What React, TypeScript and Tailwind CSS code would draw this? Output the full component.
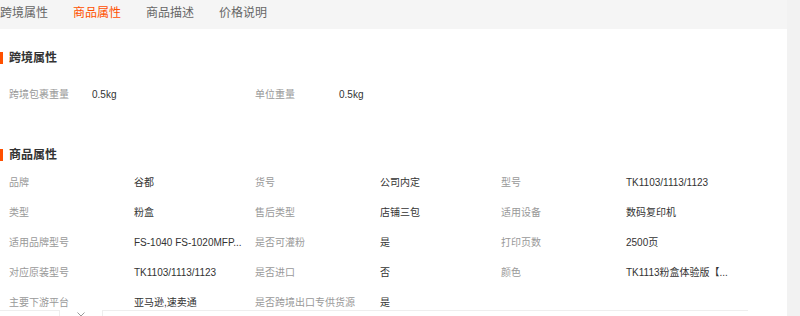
import React from "react";

const font = { fontFamily: '"Liberation Sans", "Noto Sans CJK SC", sans-serif' };

function Heading({ title }: { title: string }) {
  return (
    <div className="flex items-center h-[16px]">
      <div className="w-[3px] h-[12px] bg-[#ff5000]" />
      <div className="ml-[6px] text-[12px] font-bold text-[#333] leading-[16px]">{title}</div>
    </div>
  );
}

type Cell = [string, string];

function Row({ cells, labelW }: { cells: Cell[]; labelW: number }) {
  return (
    <div className="flex h-[30px] items-center pl-[9px] text-[10px]">
      {cells.map(([l, v], i) => (
        <div key={i} className="flex w-[246px] shrink-0">
          <div
            className="text-[#999] whitespace-nowrap shrink-0"
            style={{ width: labelW }}
          >
            {l}
          </div>
          <div className="text-[#333] whitespace-nowrap">{v}</div>
        </div>
      ))}
    </div>
  );
}

export default function App() {
  const rows: Cell[][] = [
    [["品牌", "谷都"], ["货号", "公司内定"], ["型号", "TK1103/1113/1123"]],
    [["类型", "粉盒"], ["售后类型", "店铺三包"], ["适用设备", "数码复印机"]],
    [["适用品牌型号", "FS-1040 FS-1020MFP..."], ["是否可灌粉", "是"], ["打印页数", "2500页"]],
    [["对应原装型号", "TK1103/1113/1123"], ["是否进口", "否"], ["颜色", "TK1113粉盒体验版【..."]],
    [["主要下游平台", "亚马逊,速卖通"], ["是否跨境出口专供货源", "是"]],
  ];
  return (
    <div className="relative flex items-start w-[800px] h-[316px] overflow-hidden bg-[#f2f2f2]" style={font}>
      <div className="w-[787px] h-[316px] shrink-0 bg-white">
        <div className="h-[29px] bg-[#f5f5f5] flex items-center gap-[25px] text-[12px] text-[#666] pb-[4px]">
          <span>跨境属性</span>
          <span className="text-[#ff5000]">商品属性</span>
          <span>商品描述</span>
          <span>价格说明</span>
        </div>
        <div className="pt-[21px]">
          <Heading title="跨境属性" />
          <div className="mt-[13px]">
            <div className="flex h-[30px] items-center pl-[9px] text-[10px]">
              <div className="flex w-[246px] shrink-0">
                <div className="w-[83px] text-[#999]">跨境包裹重量</div>
                <div className="text-[#333]">0.5kg</div>
              </div>
              <div className="flex w-[246px] shrink-0">
                <div className="w-[84px] text-[#999]">单位重量</div>
                <div className="text-[#333]">0.5kg</div>
              </div>
            </div>
          </div>
        </div>
        <div className="mt-[38px]">
          <Heading title="商品属性" />
          <div className="mt-[4px]">
            {rows.map((r, i) => (
              <Row key={i} cells={r} labelW={125} />
            ))}
          </div>
        </div>
      </div>
      <div className="absolute left-0 top-[310px] w-[748px] h-[10px] flex">
        <div className="w-[60px] h-full border-t border-r border-[#eee] bg-white" />
        <div className="w-[42px] flex justify-center pt-[1px]">
          <svg width="8" height="5" viewBox="0 0 8 5" className="mt-[1px]">
            <path d="M0.5 0.5 L4 4 L7.5 0.5" fill="none" stroke="#999" strokeWidth="1" />
          </svg>
        </div>
        <div className="flex-1 h-full border-t border-l border-[#eee] bg-white" />
      </div>
    </div>
  );
}
